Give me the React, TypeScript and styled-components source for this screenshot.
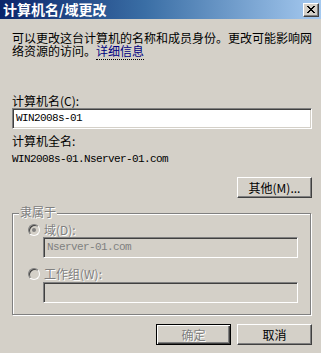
import React from "react";
import styled, { createGlobalStyle } from "styled-components";

const GlobalStyle = createGlobalStyle`
  html, body { margin: 0; padding: 0; background: #d4d0c8; }
  body {
    font-family: "Noto Sans CJK SC", "Liberation Sans", sans-serif;
    text-spacing-trim: space-all;
    font-feature-settings: "chws" 0, "halt" 0, "palt" 0;
  }
`;

const Window = styled.div`
  width: 321px;
  height: 353px;
  background: #d4d0c8;
  display: flex;
  flex-direction: column;
  overflow: hidden;
  color: #000;
  font-size: 12px;
`;

const TitleBar = styled.div`
  height: 19px;
  flex: none;
  display: flex;
  align-items: center;
  justify-content: space-between;
  padding: 0 2px 0 3px;
  background: linear-gradient(to right, #0a246a 0%, #3a6ea5 45%, #a6caf0 100%);
`;

const TitleText = styled.span`
  color: #fff;
  font-weight: 700;
  font-size: 14px;
  line-height: 19px;
`;

const CloseButton = styled.div`
  width: 16px;
  height: 14px;
  box-sizing: border-box;
  background: #d4d0c8;
  border: 1px solid;
  border-color: #fff #404040 #404040 #fff;
  box-shadow: inset -1px -1px 0 #808080;
  display: flex;
  align-items: center;
  justify-content: center;
  padding-bottom: 1px;
`;

const Body = styled.div`
  display: flex;
  flex-direction: column;
  padding: 12px 9px 0 12px;
`;

const Intro = styled.p`
  margin: 0;
  width: 300px;
  line-height: 13px;
  font-size: 12px;
  white-space: nowrap;
`;

const Link = styled.span`
  color: #000080;
  border-bottom: 1px dotted #000;
`;

const Label = styled.div<{ $mt: number }>`
  margin-top: ${(p) => p.$mt}px;
  line-height: 13px;
  font-size: 12px;
`;

const Mono = styled.span<{ $disabled?: boolean }>`
  font-family: "Liberation Mono", monospace;
  font-size: 11px;
  letter-spacing: -0.6px;
  color: ${(p) => (p.$disabled ? "#808080" : "#000")};
`;

const FieldValue = styled.div`
  margin-top: 3px;
  line-height: 13px;
`;

const TextField = styled.div<{ $disabled?: boolean; $mt: number; $ml?: number; $w: number }>`
  box-sizing: border-box;
  margin-top: ${(p) => p.$mt}px;
  margin-left: ${(p) => p.$ml ?? 0}px;
  width: ${(p) => p.$w}px;
  height: 21px;
  border: 1px solid;
  border-color: #808080 #fff #fff #808080;
  box-shadow: inset 1px 1px 0 #404040, inset -1px -1px 0 #d4d0c8;
  background: ${(p) => (p.$disabled ? "#d4d0c8" : "#fff")};
  padding: 0 3px;
  display: flex;
  align-items: center;
  line-height: 13px;
`;

const ButtonRow = styled.div<{ $mt: number }>`
  display: flex;
  justify-content: flex-end;
  gap: 6px;
  margin-top: ${(p) => p.$mt}px;
`;

const Button = styled.div<{ $default?: boolean; $disabled?: boolean }>`
  box-sizing: border-box;
  width: 75px;
  height: 21px;
  background: #d4d0c8;
  display: flex;
  align-items: center;
  justify-content: center;
  font-size: 12px;
  line-height: 13px;
  border: 1px solid;
  border-color: ${(p) => (p.$default ? "#000" : "#fff #404040 #404040 #fff")};
  box-shadow: ${(p) =>
    p.$default
      ? "inset 1px 1px 0 #fff, inset -1px -1px 0 #404040, inset -2px -2px 0 #808080"
      : "inset -1px -1px 0 #808080"};
  color: ${(p) => (p.$disabled ? "#808080" : "#000")};
  text-shadow: ${(p) => (p.$disabled ? "1px 1px 0 #fff" : "none")};
`;

const GroupBox = styled.div`
  position: relative;
  box-sizing: border-box;
  margin-top: 15px;
  width: 299px;
  border: 1px solid #808080;
  box-shadow: inset 1px 1px 0 #fff, 1px 1px 0 #fff;
  padding: 9px 0 11px 15px;
  display: flex;
  flex-direction: column;
`;

const GroupTitle = styled.span`
  position: absolute;
  top: -9px;
  left: 6px;
  padding: 0 1px;
  background: #d4d0c8;
  line-height: 13px;
  color: #808080;
  text-shadow: 1px 1px 0 #fff;
`;

const RadioRow = styled.div<{ $mt: number }>`
  margin-top: ${(p) => p.$mt}px;
  height: 13px;
  display: flex;
  align-items: center;
  gap: 4px;
`;

const Radio = styled.span<{ $checked?: boolean }>`
  position: relative;
  box-sizing: border-box;
  width: 12px;
  height: 12px;
  flex: none;
  border-radius: 50%;
  border: 1px solid;
  border-color: #808080 #fff #fff #808080;
  box-shadow: inset 1px 1px 0 #404040, inset -1px -1px 0 #d4d0c8;
  background: #d4d0c8;
  &::after {
    content: "";
    display: ${(p) => (p.$checked ? "block" : "none")};
    position: absolute;
    left: 3px;
    top: 3px;
    width: 4px;
    height: 4px;
    border-radius: 50%;
    background: #808080;
  }
`;

const DisabledText = styled.span`
  color: #808080;
  text-shadow: 1px 1px 0 #fff;
  line-height: 13px;
`;

const CloseIcon = () => (
  <svg width="8" height="7" viewBox="0 0 8 7" shapeRendering="crispEdges">
    <path
      d="M0 0h2v1h1v1h2V1h1V0h2v1H7v1H6v1H5v1h1v1h1v1h1v1H6V6H5V5H3v1H2v1H0V6h1V5h1V4h1V3H2V2H1V1H0z"
      fill="#000"
    />
  </svg>
);

export default function App() {
  return (
    <>
      <GlobalStyle />
      <Window>
        <TitleBar>
          <TitleText>计算机名/域更改</TitleText>
          <CloseButton>
            <CloseIcon />
          </CloseButton>
        </TitleBar>
        <Body>
          <Intro>
            可以更改这台计算机的名称和成员身份。更改可能影响网
            <br />
            络资源的访问。<Link>详细信息</Link>
          </Intro>
          <Label $mt={37}>计算机名(C):</Label>
          <TextField $mt={1} $w={300}>
            <Mono>WIN2008s-01</Mono>
          </TextField>
          <Label $mt={5}>计算机全名:</Label>
          <FieldValue>
            <Mono>WIN2008s-01.Nserver-01.com</Mono>
          </FieldValue>
          <ButtonRow $mt={11}>
            <Button>其他(M)...</Button>
          </ButtonRow>
          <GroupBox>
            <GroupTitle>隶属于</GroupTitle>
            <RadioRow $mt={0}>
              <Radio $checked />
              <DisabledText>域(D):</DisabledText>
            </RadioRow>
            <TextField $disabled $mt={1} $ml={15} $w={255}>
              <Mono $disabled>Nserver-01.com</Mono>
            </TextField>
            <RadioRow $mt={9}>
              <Radio />
              <DisabledText>工作组(W):</DisabledText>
            </RadioRow>
            <TextField $disabled $mt={2} $ml={15} $w={255} />
          </GroupBox>
          <ButtonRow $mt={9}>
            <Button $default $disabled>
              确定
            </Button>
            <Button>取消</Button>
          </ButtonRow>
        </Body>
      </Window>
    </>
  );
}
